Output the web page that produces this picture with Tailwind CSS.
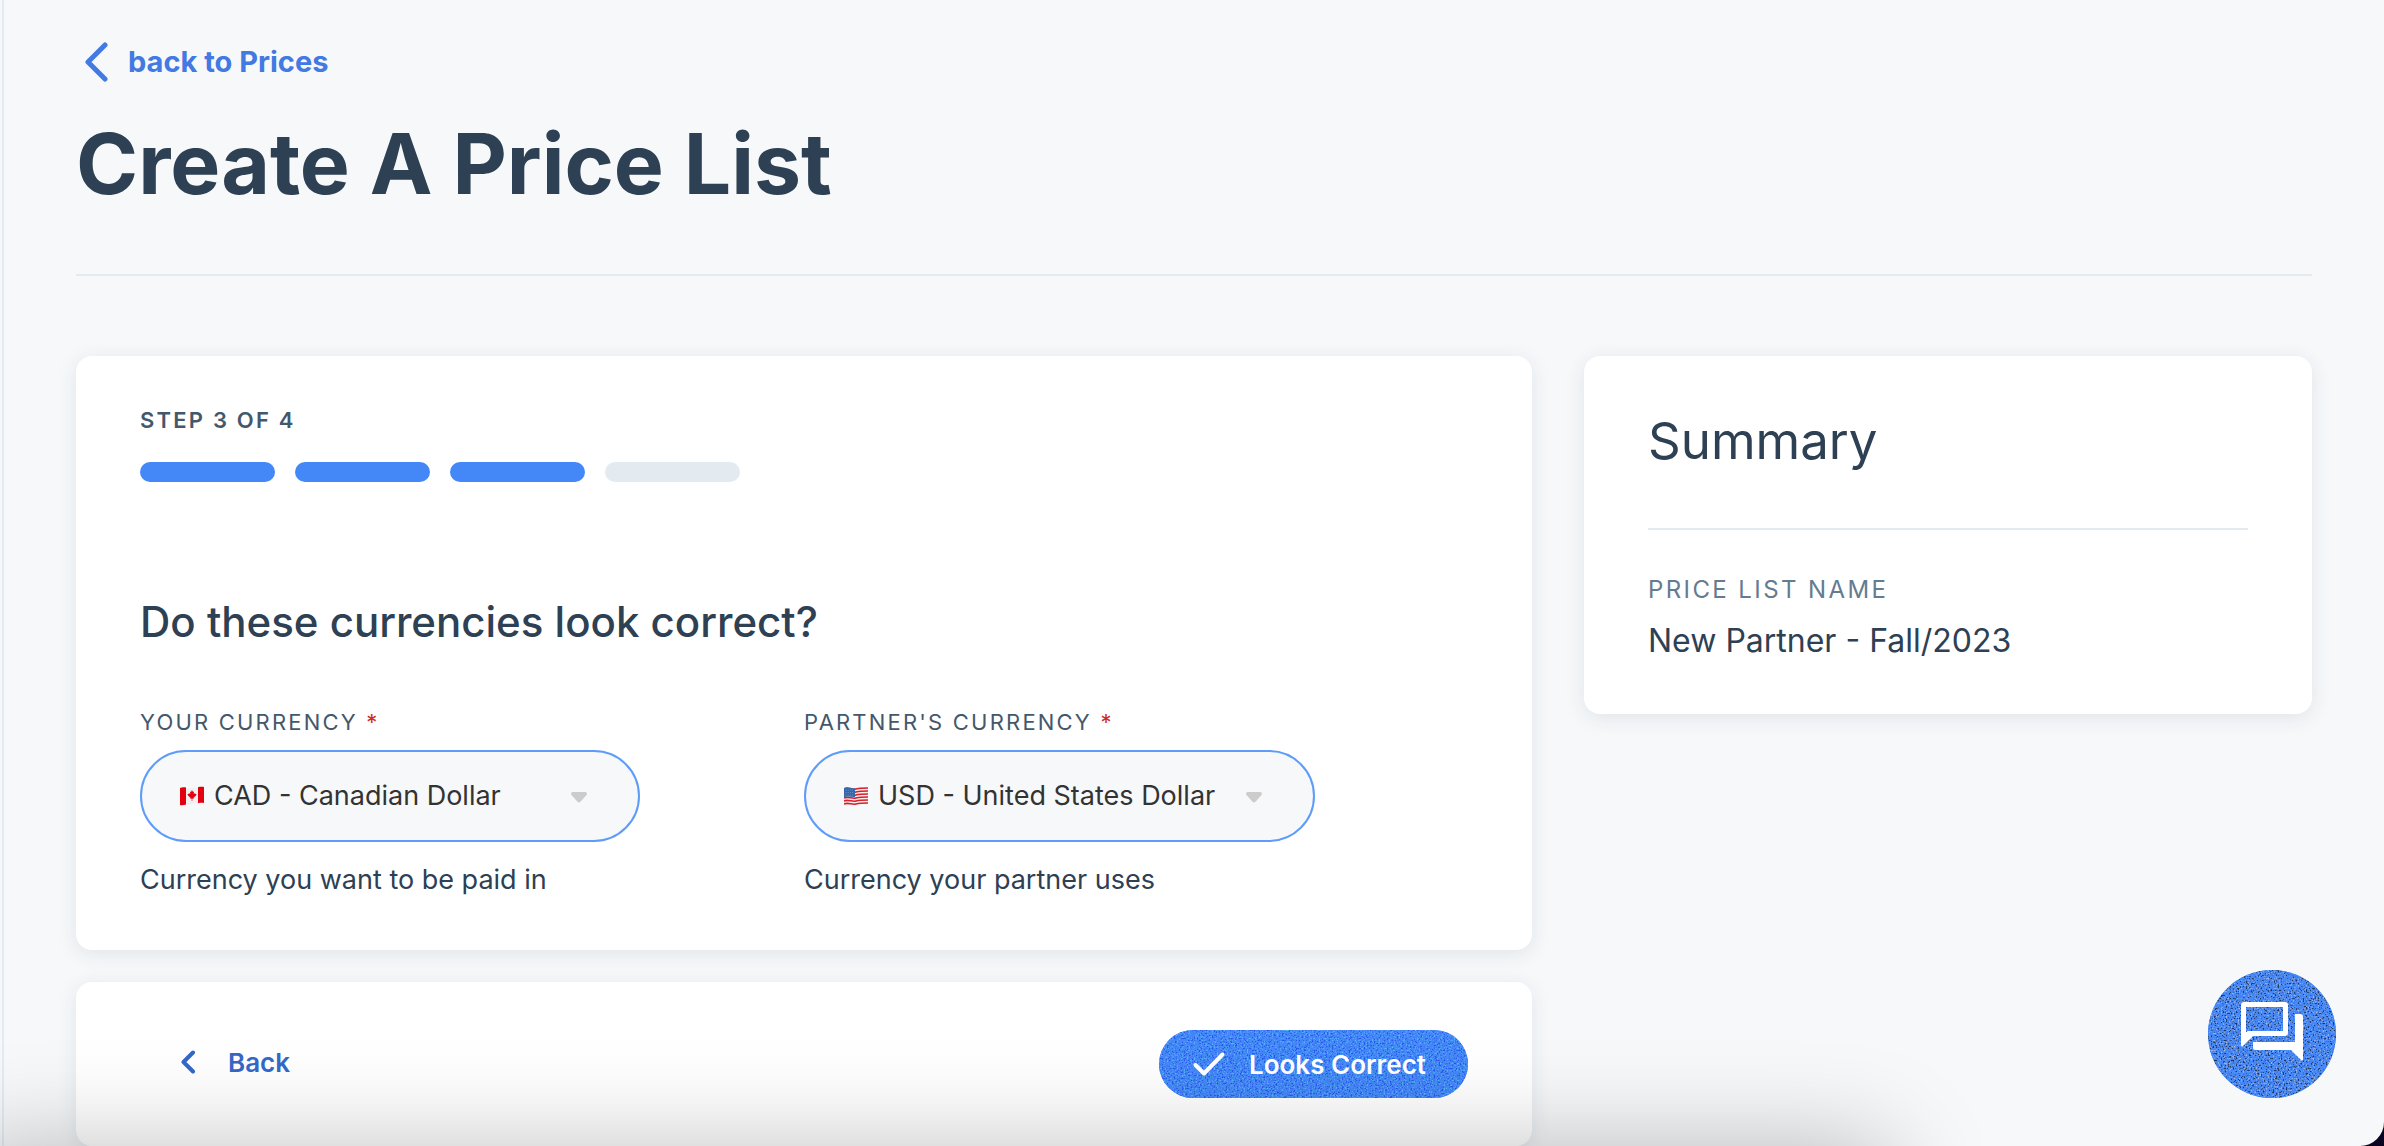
<!DOCTYPE html>
<html lang="en">
<head>
    <meta charset="UTF-8">
    <meta name="viewport" content="width=device-width, initial-scale=1.0">
    <title>Create A Price List</title>
    <script src="https://cdn.jsdelivr.net/npm/@tailwindcss/browser@4"></script>
</head>
<body class="bg-[#0b0420] font-['Inter',sans-serif] text-[#2e4053]">
    <div class="relative min-h-screen overflow-hidden rounded-br-[24px] bg-[#f6f8fa] pl-[2px]">
        <div class="min-h-screen border-l-2 border-[#e3ebf4] pl-[72px] pr-[72px] pt-[42px]">
            <header>
                <a href="#" class="flex h-10 w-fit items-center gap-5 pl-2 text-[29px] font-bold text-[#4279e2]">
                    <svg class="h-10 w-6" viewBox="0 0 24 40" fill="none" stroke="currentColor" stroke-width="5" stroke-linecap="round" stroke-linejoin="round"><path d="M21 3 4 20l17 17"/></svg>
                    back to Prices
                </a>
                <h1 class="mt-[34px] text-[84px] leading-[96px] font-bold">Create A Price List</h1>
            </header>
            <hr class="mt-[62px] border-t-2 border-[#e3ebf2]">

            <main class="mt-20 grid grid-cols-[2fr_1fr] items-start gap-[52px]">
                <form>
                    <section class="rounded-2xl bg-white px-16 py-[50px] shadow-[0_4px_20px_rgba(46,64,83,0.10)]">
                        <p class="text-[22px] leading-7 font-semibold tracking-widest text-[#44586c]">STEP 3 OF 4</p>
                        <div class="mt-7 flex gap-5">
                            <div class="h-5 w-[135px] rounded-full bg-[#4488f8]"></div>
                            <div class="h-5 w-[135px] rounded-full bg-[#4488f8]"></div>
                            <div class="h-5 w-[135px] rounded-full bg-[#4488f8]"></div>
                            <div class="h-5 w-[135px] rounded-full bg-[#e3ebf0]"></div>
                        </div>

                        <h2 class="mt-[116px] text-[42px] leading-[48px] font-medium">Do these currencies look correct?</h2>

                        <div class="mt-[62px] grid grid-cols-2">
                            <div>
                                <label for="your-currency" class="block text-[22px] leading-7 tracking-widest text-[#44586c]">YOUR CURRENCY <span class="text-[#cf2a1e]">*</span></label>
                                <div class="relative mt-[14px] w-[500px]">
                                    <select id="your-currency" class="block h-[92px] w-full appearance-none rounded-full border-2 border-[#5f9cf9] bg-[#f6f8fa] pl-[72px] text-[27px] text-[#333]">
                                        <option>CAD - Canadian Dollar</option>
                                    </select>
                                    <svg class="pointer-events-none absolute top-9 left-10 h-5 w-6" viewBox="0 0 24 20">
                                        <path d="M0 2c4-2 8 1 12 0s8-1 12-1v16c-4 0-8 0-12 1s-8 2-12 1z" fill="#f1f1f1"/>
                                        <path d="M0 2c2-1 4-1 6-.5v17C4 19 2 19.500 0 19zM18 1.200c2-.4 4-.4 6-.2v16c-2-.2-4-.2-6 .2z" fill="#e3000f"/>
                                        <path d="m12 4 1 2 1-.5-.3 2.700 1.300-1.200.4 1 1.100-.1-.5 1.700-2.400 2.200.2.900-1.500-.2V15h-.6v-2.500l-1.500.2.200-.9L8 9.600l-.5-1.700 1.100.1.400-1 1.300 1.200L10 5.500l1 .5z" fill="#e3000f"/>
                                    </svg>
                                    <svg class="pointer-events-none absolute top-[42px] right-[53px] h-[11px] w-4" viewBox="0 0 16 11"><path d="M2 0h12c2 0 2.500 2 1.300 3.300L9.500 9.800c-1 1-2 1-3 0L.7 3.300C-.5 2 0 0 2 0z" fill="#ccc"/></svg>
                                </div>
                                <p class="mt-[18px] text-[27px] leading-10">Currency you want to be paid in</p>
                            </div>
                            <div>
                                <label for="partner-currency" class="block text-[22px] leading-7 tracking-widest text-[#44586c]">PARTNER'S CURRENCY <span class="text-[#cf2a1e]">*</span></label>
                                <div class="relative mt-[14px] w-[511px]">
                                    <select id="partner-currency" class="block h-[92px] w-full appearance-none rounded-full border-2 border-[#5f9cf9] bg-[#f6f8fa] pl-[72px] text-[27px] text-[#333]">
                                        <option>USD - United States Dollar</option>
                                    </select>
                                    <svg class="pointer-events-none absolute top-9 left-10 h-5 w-6" viewBox="0 0 24 20" fill="none">
                                        <path d="M0 2c4-2 8 1 12 0s8-1 12-1v16c-4 0-8 0-12 1s-8 2-12 1z" fill="#f3eeee"/>
                                        <path d="M0 3c4-2 8 1 12 0s8-1 12-1M0 6c4-2 8 1 12 0s8-1 12-1M0 9c4-2 8 1 12 0s8-1 12-1M0 12c4-2 8 1 12 0s8-1 12-1M0 15c4-2 8 1 12 0s8-1 12-1M0 18c4-2 8 1 12 0s8-1 12-1" stroke="#d8202c" stroke-width="1.600"/>
                                        <path d="M0 2c4-2 8 1 11 .3V11c-4 .5-7-1.500-11 .3z" fill="#3566a8"/>
                                        <path d="M1.500 4h9M1.500 6.500h9M1.500 9h9" stroke="#7fa3d4" stroke-width=".7" stroke-dasharray="1 1.200"/>
                                    </svg>
                                    <svg class="pointer-events-none absolute top-[42px] right-[53px] h-[11px] w-4" viewBox="0 0 16 11"><path d="M2 0h12c2 0 2.500 2 1.300 3.300L9.500 9.800c-1 1-2 1-3 0L.7 3.300C-.5 2 0 0 2 0z" fill="#ccc"/></svg>
                                </div>
                                <p class="mt-[18px] text-[27px] leading-10">Currency your partner uses</p>
                            </div>
                        </div>
                    </section>

                    <section class="mt-8 flex items-center justify-between rounded-2xl bg-white px-16 py-12 shadow-[0_4px_20px_rgba(46,64,83,0.10)]">
                        <button type="button" class="flex h-16 items-center gap-8 pb-1 pl-10 text-[26px] font-semibold text-[#3468c8]">
                            <svg class="h-6 w-4" viewBox="0 0 16 24" fill="none" stroke="currentColor" stroke-width="4" stroke-linecap="round" stroke-linejoin="round"><path d="m13 2.500-9.500 9.500 9.500 9.500"/></svg>
                            Back
                        </button>
                        <button type="submit" class="relative flex h-[68px] w-[309px] items-center gap-6 overflow-hidden rounded-full bg-[#4488f8] pl-[34px] text-[26px] font-semibold text-white">
                            <!-- grain -->
                            <svg class="absolute inset-0 h-full w-full" aria-hidden="true">
                                <filter id="grain-blue" color-interpolation-filters="sRGB" x="0" y="0" width="100%" height="100%">
                                    <feTurbulence type="fractalNoise" baseFrequency="0.6" numOctaves="2" seed="4"/>
                                    <feColorMatrix values="1 0 0 0 0  1 0 0 0 0  1 0 0 0 0  0 0 0 0 1"/>
                                    <feComponentTransfer>
                                        <feFuncR type="table" tableValues=".16 .16 .16 .17 .25 .27 .28 .31 .33 .33 .33"/>
                                        <feFuncG type="table" tableValues=".32 .32 .32 .34 .5 .53 .56 .68 .72 .72 .72"/>
                                        <feFuncB type="table" tableValues=".94 .94 .94 .94 .96 .97 .97 .97 .97 .97 .97"/>
                                    </feComponentTransfer>
                                </filter>
                                <rect width="100%" height="100%" filter="url(#grain-blue)"/>
                            </svg>
                            <svg class="relative h-6 w-8" viewBox="0 0 32 24" fill="none" stroke="currentColor" stroke-width="4" stroke-linecap="round" stroke-linejoin="round"><path d="m2.500 13 8.500 8.500L29.500 2.500"/></svg>
                            <span class="relative">Looks Correct</span>
                        </button>
                    </section>
                </form>

                <aside class="rounded-2xl bg-white px-16 py-[53px] shadow-[0_4px_20px_rgba(46,64,83,0.10)]">
                    <h2 class="text-[51px] leading-[64px]">Summary</h2>
                    <hr class="mt-[55px] border-t-2 border-[#e3ebf0]">
                    <p class="mt-[46px] text-[24px] leading-7 tracking-widest text-[#647b90]">PRICE LIST NAME</p>
                    <p class="mt-[17px] text-[32px] leading-10">New Partner - Fall/2023</p>
                </aside>
            </main>
        </div>

        <!-- shadow rising from the bottom edge -->
        <div class="pointer-events-none fixed right-[495px] -bottom-[300px] -left-10 h-[300px] shadow-[0_0_100px_rgba(0,0,0,0.25)]"></div>

        <button type="button" aria-label="Open chat" class="fixed right-12 bottom-12 flex size-32 items-center justify-center overflow-hidden rounded-full bg-[#4488f8] pb-1 text-white">
            <svg class="absolute inset-0 h-full w-full" aria-hidden="true">
                <filter id="grain-gray" color-interpolation-filters="sRGB" x="0" y="0" width="100%" height="100%">
                    <feTurbulence type="fractalNoise" baseFrequency="0.6" numOctaves="2" seed="9"/>
                    <feColorMatrix values="1 0 0 0 0  1 0 0 0 0  1 0 0 0 0  0 0 0 0 1"/>
                    <feComponentTransfer>
                        <feFuncR type="table" tableValues=".13 .13 .13 .15 .25 .27 .3 .52 .65 .65 .65"/>
                        <feFuncG type="table" tableValues=".2 .2 .2 .25 .5 .53 .55 .65 .72 .72 .72"/>
                        <feFuncB type="table" tableValues=".35 .35 .35 .42 .9 .97 .97 .93 .9 .9 .9"/>
                    </feComponentTransfer>
                </filter>
                <rect width="100%" height="100%" filter="url(#grain-gray)"/>
            </svg>
            <svg class="relative h-[60px] w-[62px]" viewBox="0 0 62 60" fill="currentColor">
                <path fill-rule="evenodd" d="M3 0h41a3 3 0 0 1 3 3v28a3 3 0 0 1-3 3H12L2 44c-1 1-2 .5-2-1V3a3 3 0 0 1 3-3zm2 5v25l2-1h35V5z"/>
                <path d="M54 12h5a3 3 0 0 1 3 3v42c0 1.500-1 2-2 1L50 48H14a2 2 0 0 1-2-2v-6h42z"/>
            </svg>
        </button>
    </div>
</body>
</html>
